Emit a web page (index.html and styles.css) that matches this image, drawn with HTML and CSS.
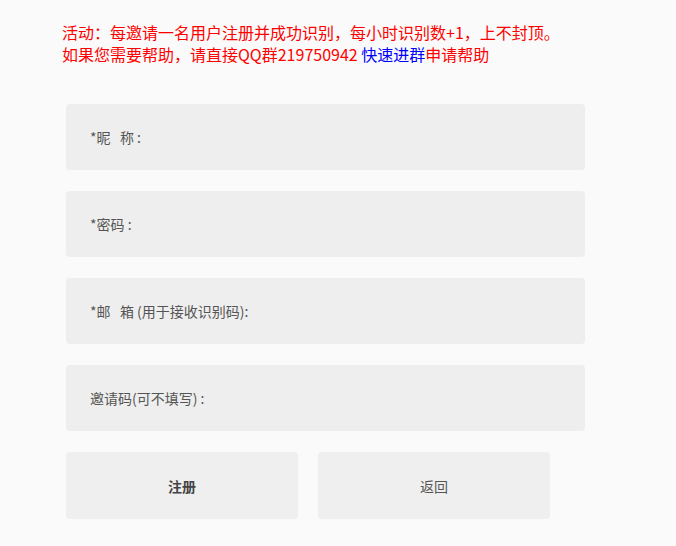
FILE: index.html
```html
<!DOCTYPE html>
<html lang="zh-CN">
<head>
<meta charset="utf-8">
<title>注册</title>
<link rel="stylesheet" href="styles.css">
</head>
<body>
<div class="page">
  <div class="notice">
    <p>活动：每邀请一名用户注册并成功识别，每小时识别数+1，上不封顶。</p>
    <p>如果您需要帮助，请直接QQ群219750942 <a class="link" href="#">快速进群</a>申请帮助</p>
  </div>
  <form class="form">
    <div class="field"><span class="label">*昵&nbsp;&nbsp;&nbsp;称 :</span></div>
    <div class="field"><span class="label">*密码 :</span></div>
    <div class="field"><span class="label">*邮&nbsp;&nbsp;&nbsp;箱 (用于接收识别码):</span></div>
    <div class="field"><span class="label">邀请码(可不填写) :</span></div>
    <div class="actions">
      <button type="button" class="btn btn-primary">注册</button>
      <button type="button" class="btn">返回</button>
    </div>
  </form>
</div>
</body>
</html>
```
FILE: styles.css
```css
html, body {
  margin: 0;
  padding: 0;
  background: #fafafa;
}
body {
  font-family: "Noto Sans CJK SC", "Noto Sans", sans-serif;
  color: #555;
}
.page {
  padding: 21px 0 0 62px;
}
.notice p {
  margin: 0;
  font-size: 16px;
  line-height: 22px;
  color: #ff0000;
}
.link {
  color: #0000ff;
  text-decoration: none;
}
.form {
  margin: 39px 0 0 4px;
  display: flex;
  flex-direction: column;
  gap: 21px;
}
.field {
  width: 519px;
  height: 66px;
  background: #eeeeee;
  border-radius: 4px;
  display: flex;
  align-items: center;
  padding-left: 24px;
  box-sizing: border-box;
}
.label {
  font-size: 14px;
  color: #555;
}
.actions {
  display: flex;
  gap: 20px;
}
.btn {
  width: 232px;
  height: 67px;
  border: none;
  border-radius: 4px;
  background: #efefef;
  font-family: inherit;
  font-size: 14px;
  color: #555;
  padding: 0;
}
.btn-primary {
  font-weight: bold;
  color: #444;
}
```
